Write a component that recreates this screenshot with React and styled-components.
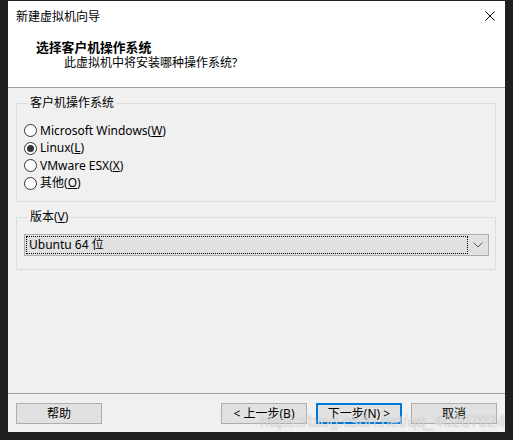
import React, { useState } from 'react'
import styled, { createGlobalStyle } from 'styled-components'

const GlobalStyle = createGlobalStyle`
  html, body {
    margin: 0;
    padding: 0;
    background: #1f1f1f;
  }
  body {
    font-family: "Noto Sans", "Noto Sans CJK SC", sans-serif;
    font-size: 12px;
    color: #000;
  }
`

const osList = [
  { id: 'win', label: 'Microsoft Windows', key: 'W' },
  { id: 'linux', label: 'Linux', key: 'L' },
  { id: 'esx', label: 'VMware ESX', key: 'X' },
  { id: 'other', label: '其他', key: 'O' },
]

function App() {
  const [os, setOs] = useState('linux')

  return (
    <>
      <GlobalStyle />
      <Window>
        <TitleBar>
          <TitleText>新建虚拟机向导</TitleText>
          <CloseButton aria-label="close">
            <svg width="10" height="10" viewBox="0 0 10 10">
              <path d="M0.5 0.5 L9.5 9.5 M9.5 0.5 L0.5 9.5" stroke="#000" strokeWidth="1" fill="none" />
            </svg>
          </CloseButton>
        </TitleBar>
        <Header>
          <HeaderTitle>选择客户机操作系统</HeaderTitle>
          <HeaderSub>此虚拟机中将安装哪种操作系统?</HeaderSub>
        </Header>

        <Body>
          <Group>
            <Legend>客户机操作系统</Legend>
            <RadioList>
              {osList.map(item => (
                <RadioRow key={item.id} onClick={() => setOs(item.id)}>
                  <RadioDot checked={os === item.id} />
                  <span>
                    {item.label}(<u>{item.key}</u>)
                  </span>
                </RadioRow>
              ))}
            </RadioList>
          </Group>

          <Group $pad="9px 6px 13px 7px">
            <Legend>
              版本(<u>V</u>)
            </Legend>
            <Combo>
              <ComboValue>Ubuntu 64 位</ComboValue>
              <ComboArrow>
                <svg width="10" height="6" viewBox="0 0 10 6">
                  <path d="M0.5 0.5 L5 5 L9.5 0.5" stroke="#5a5a5a" strokeWidth="1" fill="none" />
                </svg>
              </ComboArrow>
            </Combo>
          </Group>
        </Body>

        <Footer>
          <Button>帮助</Button>
          <Spacer />
          <Button>&lt; 上一步(B)</Button>
          <Button $primary>下一步(N) &gt;</Button>
          <Button>取消</Button>
        </Footer>

        <Watermark>https://blog.csdn.net/qq_40207024</Watermark>
      </Window>
    </>
  )
}

const Window = styled.div`
  position: relative;
  margin: 1px 0 0 8px;
  width: 497px;
  height: 431px;
  background: #f0f0f0;
  display: flex;
  flex-direction: column;
  overflow: hidden;
`

const TitleBar = styled.div`
  height: 29px;
  background: #fff;
  display: flex;
  align-items: center;
  justify-content: space-between;
  padding: 0 10px 0 8px;
`

const TitleText = styled.span`
  font-size: 12px;
  line-height: 16px;
  margin-top: 2px;
`

const CloseButton = styled.div`
  display: flex;
  align-items: center;
  margin-top: 1px;
`

const Header = styled.div`
  height: 57px;
  background: #fff;
  border-bottom: 1px solid #a0a0a0;
  padding: 9px 0 0 28px;
  box-sizing: border-box;
  height: 58px;
`

const HeaderTitle = styled.div`
  font-weight: bold;
  font-size: 12.8px;
  line-height: 16px;
`

const HeaderSub = styled.div`
  font-size: 12px;
  line-height: 16px;
  padding-left: 28px;
`

const Body = styled.div`
  flex: 1;
  padding: 7px 9px 0 8px;
  display: flex;
  flex-direction: column;
  gap: 7px;
`

const Group = styled.fieldset`
  margin: 0;
  padding: ${p => p.$pad || '11px 8px 9px 7px'};
  border: 1px solid #dcdcdc;
  min-width: 0;
`

const Legend = styled.legend`
  padding: 0 2px;
  margin-left: 4px;
  line-height: 16px;
  font-size: 12px;
`

const RadioList = styled.div`
  display: flex;
  flex-direction: column;
`

const RadioRow = styled.label`
  display: flex;
  align-items: center;
  gap: 3px;
  height: 17.5px;
  line-height: 16px;
  cursor: default;
`

const RadioDot = styled.span`
  width: 13px;
  height: 13px;
  box-sizing: border-box;
  border: 1px solid #333;
  border-radius: 50%;
  background: #fff;
  display: inline-flex;
  align-items: center;
  justify-content: center;
  flex-shrink: 0;
  &::after {
    content: '';
    width: 7px;
    height: 7px;
    border-radius: 50%;
    background: #333;
    display: ${p => (p.checked ? 'block' : 'none')};
  }
`

const Combo = styled.div`
  height: 22px;
  box-sizing: border-box;
  border: 1px solid #adadad;
  background: #e1e1e1;
  display: flex;
  align-items: stretch;
  padding: 1px 0 1px 1px;
`

const ComboValue = styled.div`
  flex: 1;
  border: 1px dotted #000;
  padding-left: 2px;
  line-height: 16px;
  display: flex;
  align-items: center;
`

const ComboArrow = styled.div`
  width: 20px;
  display: flex;
  align-items: center;
  justify-content: center;
`

const Footer = styled.div`
  border-top: 1px solid #a0a0a0;
  padding: 9px 8px 8px 8px;
  display: flex;
  gap: 9px;
`

const Spacer = styled.div`
  flex: 1;
`

const Button = styled.button`
  width: 86px;
  height: 21px;
  box-sizing: border-box;
  padding: 0;
  margin: 0;
  background: #e1e1e1;
  border: ${p => (p.$primary ? '2px solid #0078d7' : '1px solid #adadad')};
  font-family: inherit;
  font-size: 12px;
  line-height: 16px;
  color: #000;
`

const Watermark = styled.div`
  position: absolute;
  left: 252px;
  top: 412px;
  font-family: "Liberation Sans", Arial, sans-serif;
  font-size: 16px;
  line-height: 18px;
  color: rgba(255, 255, 255, 0.55);
  text-shadow: 0 0 1px rgba(120, 120, 120, 0.5);
  white-space: nowrap;
  pointer-events: none;
`

export default App
